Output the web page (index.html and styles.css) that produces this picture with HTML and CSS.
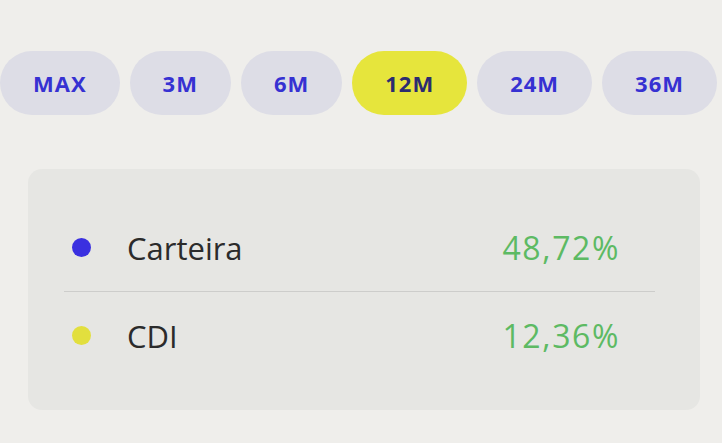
FILE: index.html
```html
<!DOCTYPE html>
<html lang="pt-BR">
<head>
<meta charset="utf-8">
<title>Rentabilidade</title>
<link rel="stylesheet" href="styles.css">
</head>
<body>
  <main class="screen">
    <nav class="periods">
      <button class="pill">MAX</button>
      <button class="pill">3M</button>
      <button class="pill">6M</button>
      <button class="pill pill--active">12M</button>
      <button class="pill">24M</button>
      <button class="pill">36M</button>
    </nav>

    <section class="card">
      <div class="row">
        <span class="dot dot--blue"></span>
        <span class="label">Carteira</span>
        <span class="value">48,72%</span>
      </div>
      <div class="row">
        <span class="dot dot--yellow"></span>
        <span class="label">CDI</span>
        <span class="value">12,36%</span>
      </div>
    </section>
  </main>
</body>
</html>
```

FILE: styles.css
```css
html, body {
  margin: 0;
  padding: 0;
}

body {
  width: 722px;
  height: 443px;
  overflow: hidden;
  background: #efeeeb;
  font-family: "Open Sans", "Noto Sans", sans-serif;
}

.screen {
  padding-top: 51px;
}

/* period selector */
.periods {
  display: flex;
  gap: 10px;
  white-space: nowrap;
}

.pill {
  flex: none;
  height: 64px;
  padding: 0 33px;
  border: 0;
  border-radius: 32px;
  background: #dddde6;
  color: #3631d2;
  font-family: "Open Sans", "Noto Sans", sans-serif;
  font-weight: 700;
  font-size: 22px;
  letter-spacing: 1px;
}

.pill--active {
  background: #e6e53c;
  color: #2c2c70;
}

/* comparison card */
.card {
  margin: 54px 22px 0 28px;
  padding: 35px 45px 31px 36px;
  background: #e6e6e3;
  border-radius: 14px;
}

.row {
  display: flex;
  align-items: center;
  height: 87px;
  padding: 0 35px 0 8px;
}

.row + .row {
  border-top: 1.5px solid #cdcdcb;
}

.dot {
  flex: none;
  width: 19px;
  height: 19px;
  border-radius: 50%;
  margin-right: 36px;
}

.dot--blue {
  background: #3a30e0;
}

.dot--yellow {
  background: #e2df3e;
}

.label {
  flex: 1;
  font-size: 31px;
  color: #2b2b2b;
}

.value {
  font-size: 32px;
  letter-spacing: 1.6px;
  color: #5dba63;
}
```
